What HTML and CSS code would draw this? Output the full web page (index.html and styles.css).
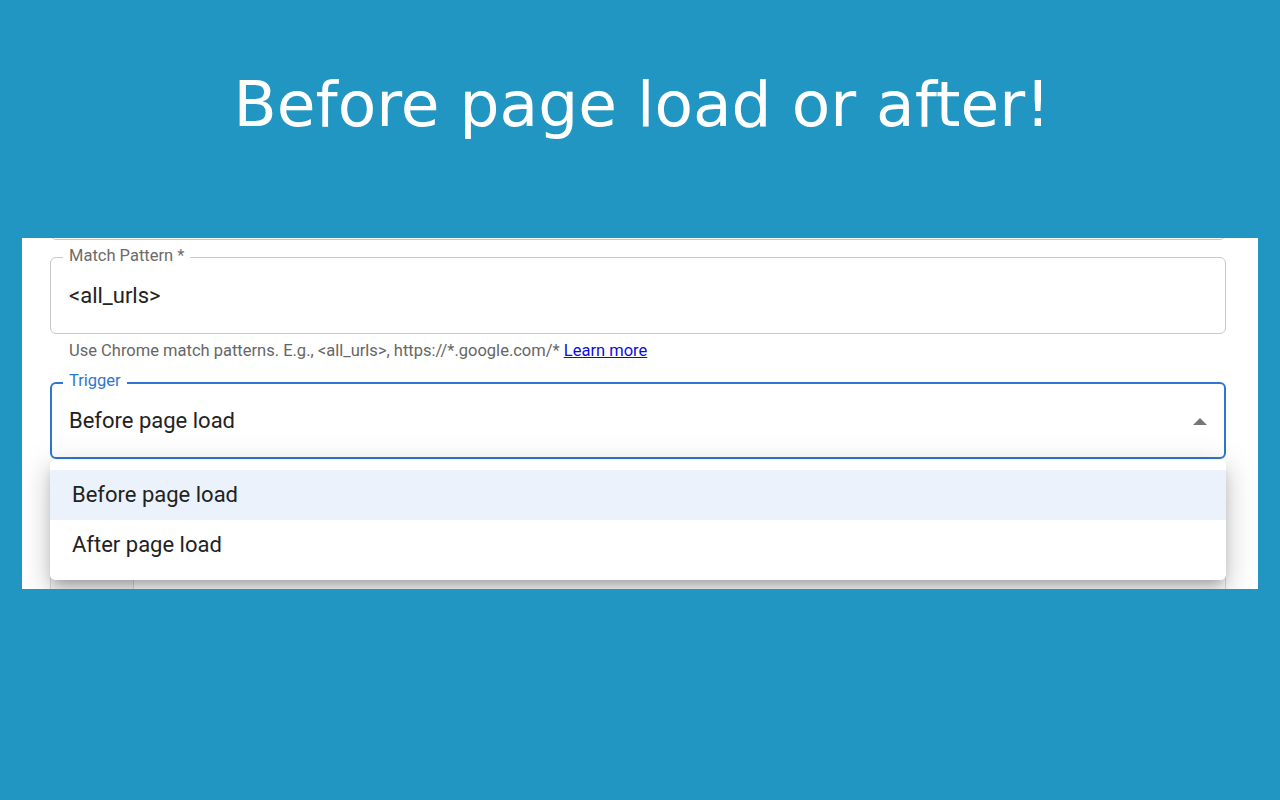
FILE: index.html
```html
<!DOCTYPE html>
<html>
<head>
  <title>Before page load or after!</title>
  <link rel="stylesheet" href="styles.css">
</head>
<body>
  <h1 class="headline">Before page load or after!</h1>

  <div class="shot">
    <div class="field field-cut"></div>

    <div class="field">
      <span class="field-label">Match Pattern *</span>
      <div class="field-value">&lt;all_urls&gt;</div>
    </div>
    <p class="helper">Use Chrome match patterns. E.g., &lt;all_urls&gt;, https://*.google.com/* <a href="#">Learn more</a></p>

    <div class="select-wrap">
      <div class="field field-focused">
        <span class="field-label">Trigger</span>
        <div class="field-value">Before page load</div>
        <span class="arrow"></span>
      </div>
      <ul class="menu">
        <li class="menu-item selected">Before page load</li>
        <li class="menu-item">After page load</li>
      </ul>
    </div>

    <div class="editor">
      <div class="gutter"></div>
      <div class="code"></div>
    </div>
  </div>
</body>
</html>
```

FILE: styles.css
```css
body {
  margin: 0;
  background-color: #2196c2;
  font-family: Roboto, "Liberation Sans", sans-serif;
}
.headline {
  margin: 0;
  padding: 65px 0 0 4px;
  font-family: "DejaVu Sans", sans-serif;
  font-weight: normal;
  font-size: 63px;
  line-height: 80px;
  color: #fff;
  text-align: center;
}
.shot {
  margin: 93px 22px 0 22px;
  height: 351px;
  overflow: hidden;
  background: #fff;
  padding: 0 32px 0 28px;
}
.field {
  position: relative;
  box-sizing: border-box;
  height: 77px;
  border: 1px solid #c8c8c8;
  border-radius: 6px;
  display: flex;
  align-items: center;
  padding: 0 18px;
}
.field-cut {
  margin-top: -75px;
  margin-bottom: 17px;
}
.field-label {
  position: absolute;
  top: -12px;
  left: 12px;
  padding: 0 6px;
  background: #fff;
  font-size: 16.5px;
  line-height: 20px;
  color: #6b6b6b;
}
.field-value {
  font-size: 22px;
  color: #222;
}
.helper {
  margin: 3px 0 0 19px;
  font-size: 16.5px;
  line-height: 27px;
  color: #666;
}
.helper a {
  color: #0c0ce6;
}
.select-wrap {
  position: relative;
  margin-top: 18px;
}
.field-focused {
  border: 2px solid #2f76d2;
  padding: 0 17px;
}
.field-focused .field-label {
  top: -13px;
  left: 11px;
  color: #2f76d2;
}
.arrow {
  position: absolute;
  right: 17px;
  top: 34px;
  width: 0;
  height: 0;
  border-left: 7px solid transparent;
  border-right: 7px solid transparent;
  border-bottom: 7px solid #767676;
}
.menu {
  position: absolute;
  top: 78px;
  left: 0;
  right: 0;
  z-index: 2;
  margin: 0;
  padding: 10px 0;
  list-style: none;
  background: #fff;
  border-radius: 5px;
  box-shadow: 0 7px 12px -4px rgba(0,0,0,0.25), 0 12px 24px 2px rgba(0,0,0,0.12), 0 4px 30px 6px rgba(0,0,0,0.08);
}
.menu-item {
  height: 50px;
  line-height: 50px;
  padding: 0 22px;
  font-size: 22px;
  color: #222;
}
.menu-item.selected {
  background: #ebf2fb;
}
.editor {
  display: flex;
  margin-top: 40px;
  height: 200px;
  border: 1px solid #ddd;
}
.gutter {
  width: 82px;
  background: #f7f7f7;
  border-right: 1px solid #ddd;
}
.code {
  flex: 1;
}
```
